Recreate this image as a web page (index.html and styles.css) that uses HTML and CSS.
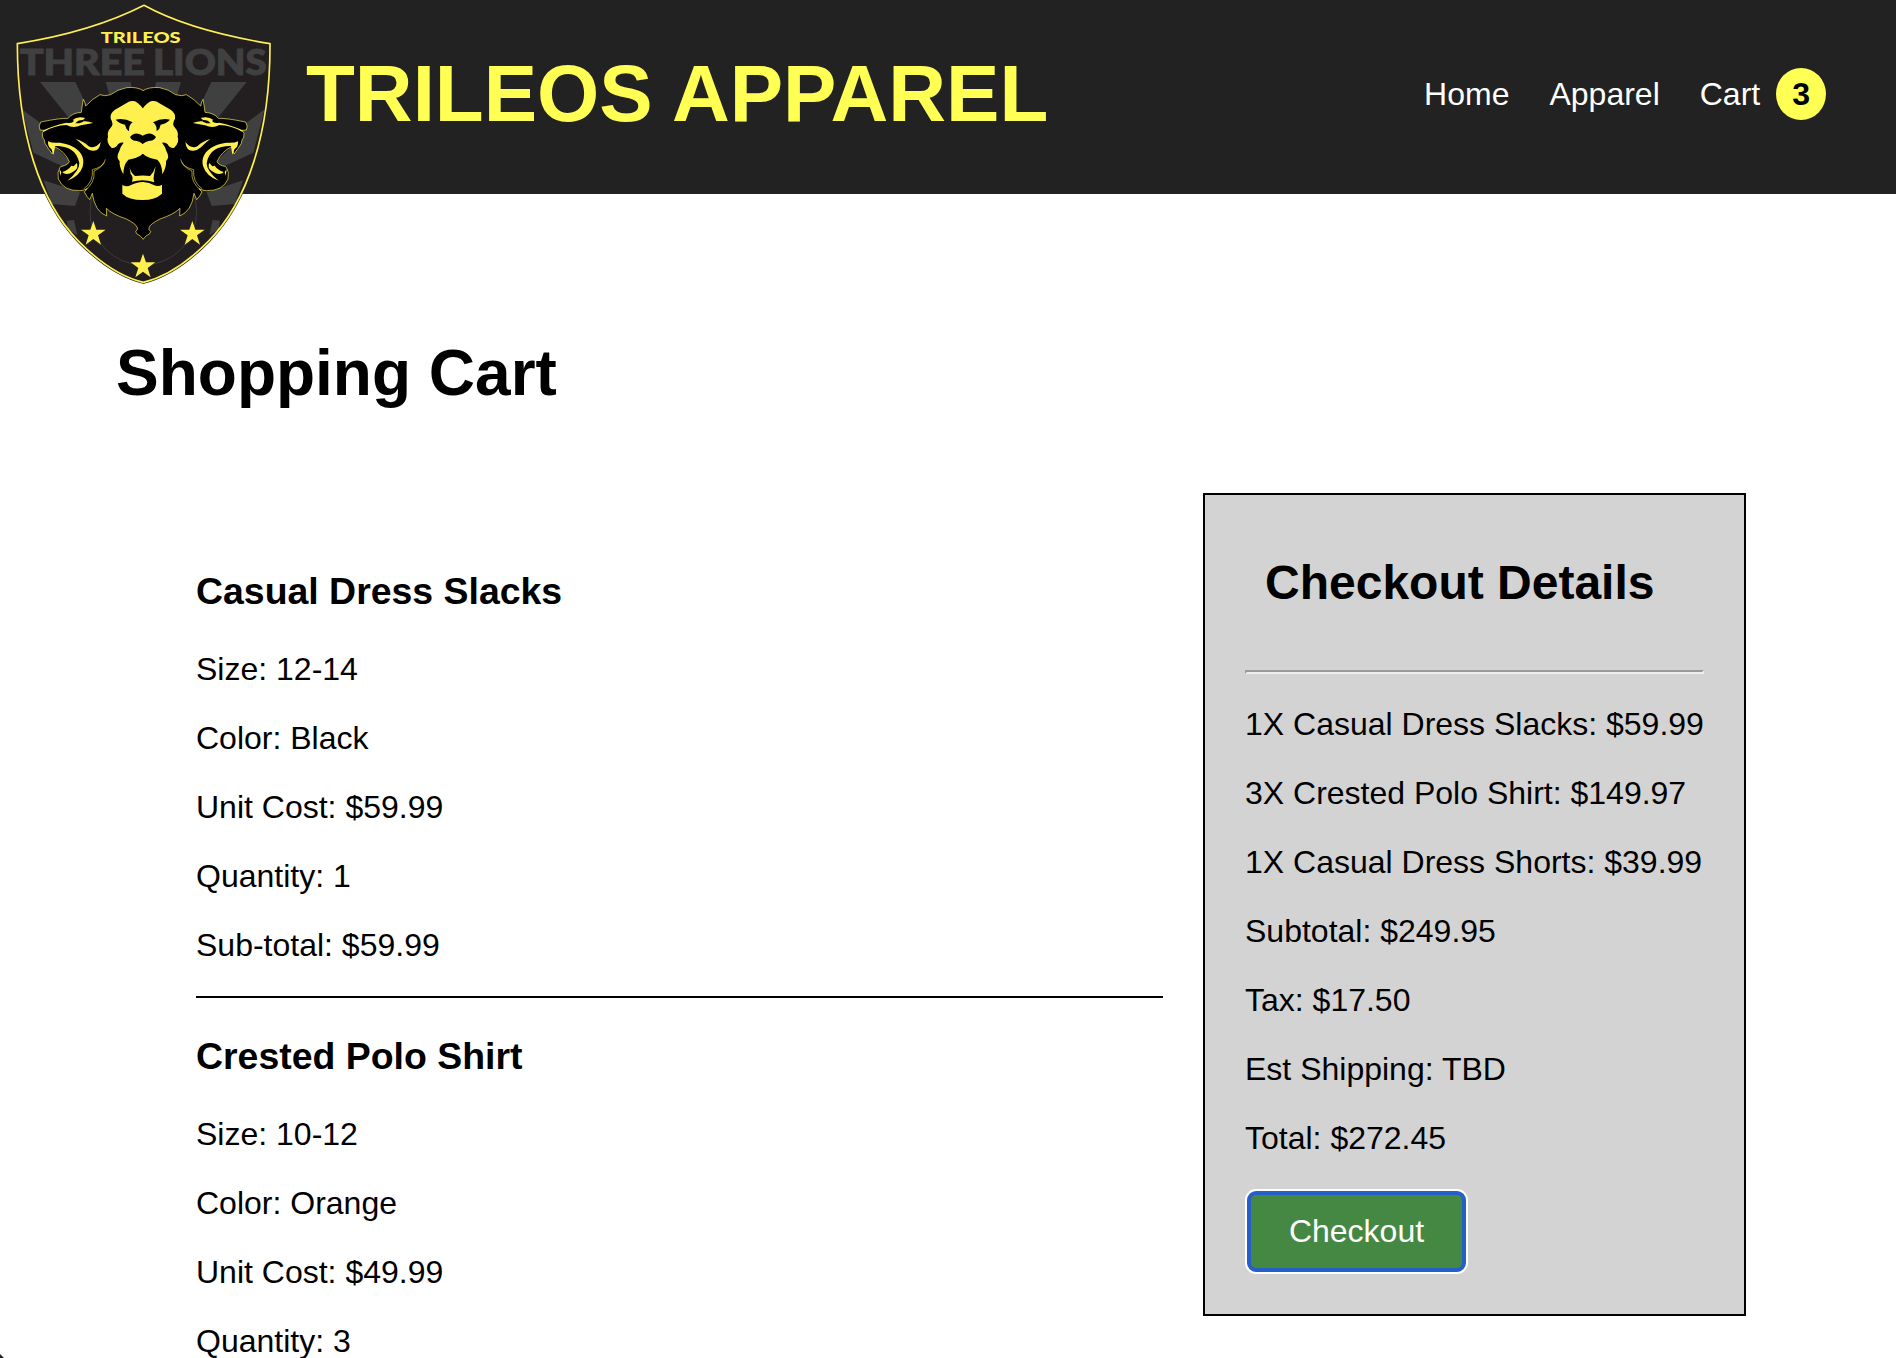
FILE: index.html
```html
<!DOCTYPE html>
<html lang="en">
<head>
<meta charset="utf-8">
<title>Trileos Apparel - Shopping Cart</title>
<link rel="stylesheet" href="styles.css">
</head>
<body>
<header class="site-header">
  <svg class="logo" viewBox="0 0 870 870" role="img" aria-label="Trileos Three Lions">
    <defs>
      <clipPath id="shield-clip"><path d="M432 16Q570 92 810 131C811 400 742 606 625 724C560 790 492 832 430 847C368 832 301 790 236 724C120 606 52 400 52 131Q275 96 432 16Z"/></clipPath>
      <g id="half-rays" fill="#404041">
        <path d="M120 246H226L266 330L205 352ZM317 246H392L400 290H330ZM66 328L128 374L165 440L212 485L200 505L100 458ZM131 541L240 577L225 618L155 612ZM200 662L222 660L232 705L205 690Z"/>
      </g>
      <path id="half-mane" d="M430 272Q412 260 380 263Q352 268 332 284Q313 290 300 284Q276 297 257 318Q255 305 250 298Q246 318 244 337Q218 338 204 355Q180 354 122 366Q114 379 120 390L132 391Q124 398 128 412Q134 418 135 430Q143 444 157 462L164 440Q195 455 208 485Q205 493 193 497Q178 499 179 504Q171 515 175 537Q190 573 239 572Q251 572 262 566L253 576Q260 590 269 599L277 580Q284 634 320 648L319 625Q337 643 379 657Q408 672 411 681Q416 687 407 695Q409 704 420 707L430 718"/>
      <g id="side-head">
        <g fill="none" stroke="#fff04f" stroke-width="1.8">
          <path d="M316 478Q312 500 282 513Q286 548 255 571"/>
          <path d="M312 487Q306 502 277 509Q281 545 251 567"/>
        </g>
        <g fill="#fff04f">
          <path d="M130 396Q163 376 200 375Q219 387 243 376L280 369Q262 362 249 364Q253 359 246 354Q225 354 219 366Q211 371 200 368Q158 377 130 391Z"/>
          <path d="M218 360Q233 347 256 354L249 359Q234 355 224 364Z"/>
          <path d="M227 417Q251 424 265 438Q284 449 302 426Q299 454 278 452Q266 452 255 442Q239 425 227 417Z"/>
          <path d="M144 424Q156 430 180 428C240 438 257 470 248 500Q239 528 202 542Q239 512 238 489C231 450 200 437 165 438L161 464L154 447Q143 442 144 424Z"/>
          <path d="M187 516Q205 510 214 497L221 499L230 489Q239 504 218 516Q205 525 191 520Z"/>
          <path d="M178 508L184 516L181 528Z"/>
        </g>
        <path d="M226 370Q234 359 250 360L250 365L238 370Z" fill="#000"/>
      </g>
      <g id="half-face">
        <path fill="#fff04f" d="M430 327Q413 304 400 303Q387 302 380 309L345 329Q329 340 332 356Q342 372 333 382Q320 397 324 410Q317 426 335 444Q347 446 354 433Q361 425 371 428Q360 441 357 455Q347 471 359 484Q357 500 370 523Q370 494 385 479Q407 476 421 467L430 460Z"/>
        <path d="M347 359Q371 353 398 367Q386 375 387 394Q377 387 375 374Q358 371 347 359Z"/>
      </g>
      <path id="star" fill="#fff04f" d="M0-38L9-12H37L14 5L23 33L0 16L-23 33L-14 5L-37-12H-9Z"/>
    </defs>
    <path fill="#231f20" stroke="#231f20" stroke-width="9" d="M432 16Q570 92 810 131C811 400 742 606 625 724C560 790 492 832 430 847C368 832 301 790 236 724C120 606 52 400 52 131Q275 96 432 16Z"/>
    <g clip-path="url(#shield-clip)">
      <use href="#half-rays"/>
      <use href="#half-rays" transform="translate(860 0) scale(-1 1)"/>
      <circle cx="430" cy="635" r="160" fill="none" stroke="#404041" stroke-width="2.5"/>
    </g>
    <text class="crest-name" x="302" y="129" textLength="240" lengthAdjust="spacingAndGlyphs">TRILEOS</text>
    <text class="crest-title" x="59" y="224" textLength="376" lengthAdjust="spacingAndGlyphs">THREE</text>
    <text class="crest-title" x="459" y="224" textLength="341" lengthAdjust="spacingAndGlyphs">LIONS</text>
    <g stroke="#fff04f" stroke-width="2">
      <use href="#half-mane"/>
      <use href="#half-mane" transform="translate(859 0) scale(-1 1)"/>
    </g>
    <path d="M420 290H440V700H420Z"/>
    <use href="#side-head"/>
    <use href="#side-head" transform="translate(858 0) scale(-1 1)"/>
    <use href="#half-face"/>
    <use href="#half-face" transform="translate(857 0) scale(-1 1)"/>
    <path d="M390 411Q400 398 414 401Q422 402 428 407Q435 402 443 401Q457 398 468 411Q460 424 449 422Q436 424 428 432Q421 424 408 422Q397 424 390 411Z"/>
    <path fill="#fff04f" d="M388 498Q391 517 405 528Q430 525 450 528Q462 516 467 498L462 524Q459 536 463 547Q430 535 396 545Q401 530 392 522ZM367 555Q380 562 392 556Q407 547 430 546Q449 548 461 555Q475 561 486 554L486 581Q466 600 428 600Q386 600 367 581Z"/>
    <use href="#star" x="280" y="701"/>
    <use href="#star" x="577" y="701"/>
    <use href="#star" x="429" y="799"/>
    <path fill="none" stroke="#fff04f" stroke-width="5" d="M432 16Q570 92 810 131C811 400 742 606 625 724C560 790 492 832 430 847C368 832 301 790 236 724C120 606 52 400 52 131Q275 96 432 16Z"/>
  </svg>
  <div class="brand">TRILEOS APPAREL</div>
  <nav class="nav">
    <a class="nav-link">Home</a>
    <a class="nav-link">Apparel</a>
    <a class="nav-link">Cart<span class="badge">3</span></a>
  </nav>
</header>
<main class="page">
  <h1 class="page-title">Shopping Cart</h1>
  <div class="cart">
    <div class="items">
      <section class="item">
        <h3>Casual Dress Slacks</h3>
        <p>Size: 12-14</p>
        <p>Color: Black</p>
        <p>Unit Cost: $59.99</p>
        <p>Quantity: 1</p>
        <p>Sub-total: $59.99</p>
      </section>
      <section class="item">
        <h3>Crested Polo Shirt</h3>
        <p>Size: 10-12</p>
        <p>Color: Orange</p>
        <p>Unit Cost: $49.99</p>
        <p>Quantity: 3</p>
      </section>
    </div>
    <aside class="checkout">
      <h2>Checkout Details</h2>
      <hr>
      <p>1X Casual Dress Slacks: $59.99</p>
      <p>3X Crested Polo Shirt: $149.97</p>
      <p>1X Casual Dress Shorts: $39.99</p>
      <p>Subtotal: $249.95</p>
      <p>Tax: $17.50</p>
      <p>Est Shipping: TBD</p>
      <p>Total: $272.45</p>
      <button class="checkout-button">Checkout</button>
    </aside>
  </div>
</main>
<div class="corner"></div>
</body>
</html>
```
FILE: styles.css
```css
* { box-sizing: border-box; }

body {
  margin: 0;
  height: 1358px;
  overflow: hidden;
  background: #fff;
  color: #000;
  font: 32px/37px "Liberation Sans", Arial, sans-serif;
}

h1, h2, h3, p { margin: 0; }

.site-header {
  display: flex;
  align-items: flex-start;
  height: 194px;
  padding-right: 70px;
  background: #222;
}

.logo {
  flex: none;
  width: 290px;
  height: 290px;
}

.crest-name, .crest-title {
  font-family: Lato, sans-serif;
  font-weight: 900;
}
.crest-name { font-size: 47px; fill: #fff04f; }
.crest-title { font-size: 106px; fill: #404041; stroke: #404041; stroke-width: 3px; }

.brand {
  margin: 48px 0 0 16px;
  color: #ffff54;
  font-size: 80px;
  font-weight: bold;
  line-height: 92px;
  white-space: nowrap;
}

.nav {
  display: flex;
  gap: 40px;
  margin: 68px 0 0 auto;
  line-height: 52px;
}

.nav-link {
  display: flex;
  color: #fff;
}

.badge {
  height: 52px;
  margin-left: 16px;
  padding: 0 16px;
  border-radius: 50%;
  background: #ffff54;
  color: #000;
  font-weight: bold;
}

.page { padding: 142px 150px 0 116px; }

.page-title {
  font-size: 64px;
  line-height: 74px;
}

.cart {
  display: flex;
  align-items: flex-start;
  gap: 40px;
  margin-top: 83px;
}

.items {
  flex: 1;
  padding: 40px 0 0 80px;
}

.item { border-bottom: 2px solid #000; }
.item h3 {
  padding: 37px 0 38px;
  font-size: 37.44px;
  line-height: 43px;
}
.item p { margin-bottom: 32px; }

.checkout {
  flex: none;
  width: 543px;
  height: 823px;
  padding: 40px;
  border: 2px solid #000;
  background: #d3d3d3;
  white-space: nowrap;
}
.checkout h2 {
  padding: 20px 20px 60px;
  font-size: 48px;
  line-height: 55px;
}
.checkout hr {
  height: 4px;
  margin: 0 0 32px;
  border: 2px solid;
  border-color: #9a9a9a #eee #eee #9a9a9a;
}
.checkout p { margin-bottom: 32px; }

.checkout-button {
  display: block;
  width: 223px;
  height: 85px;
  padding: 0;
  border: 2px solid #fff;
  border-radius: 11px;
  background: #448844;
  box-shadow: inset 0 0 0 4px #265fc9;
  color: #fff;
  font: inherit;
}

.corner {
  position: absolute;
  left: 0;
  top: 1354px;
  width: 4px;
  height: 4px;
  background: #222;
  clip-path: polygon(0 0, 100% 100%, 0 100%);
}
```
